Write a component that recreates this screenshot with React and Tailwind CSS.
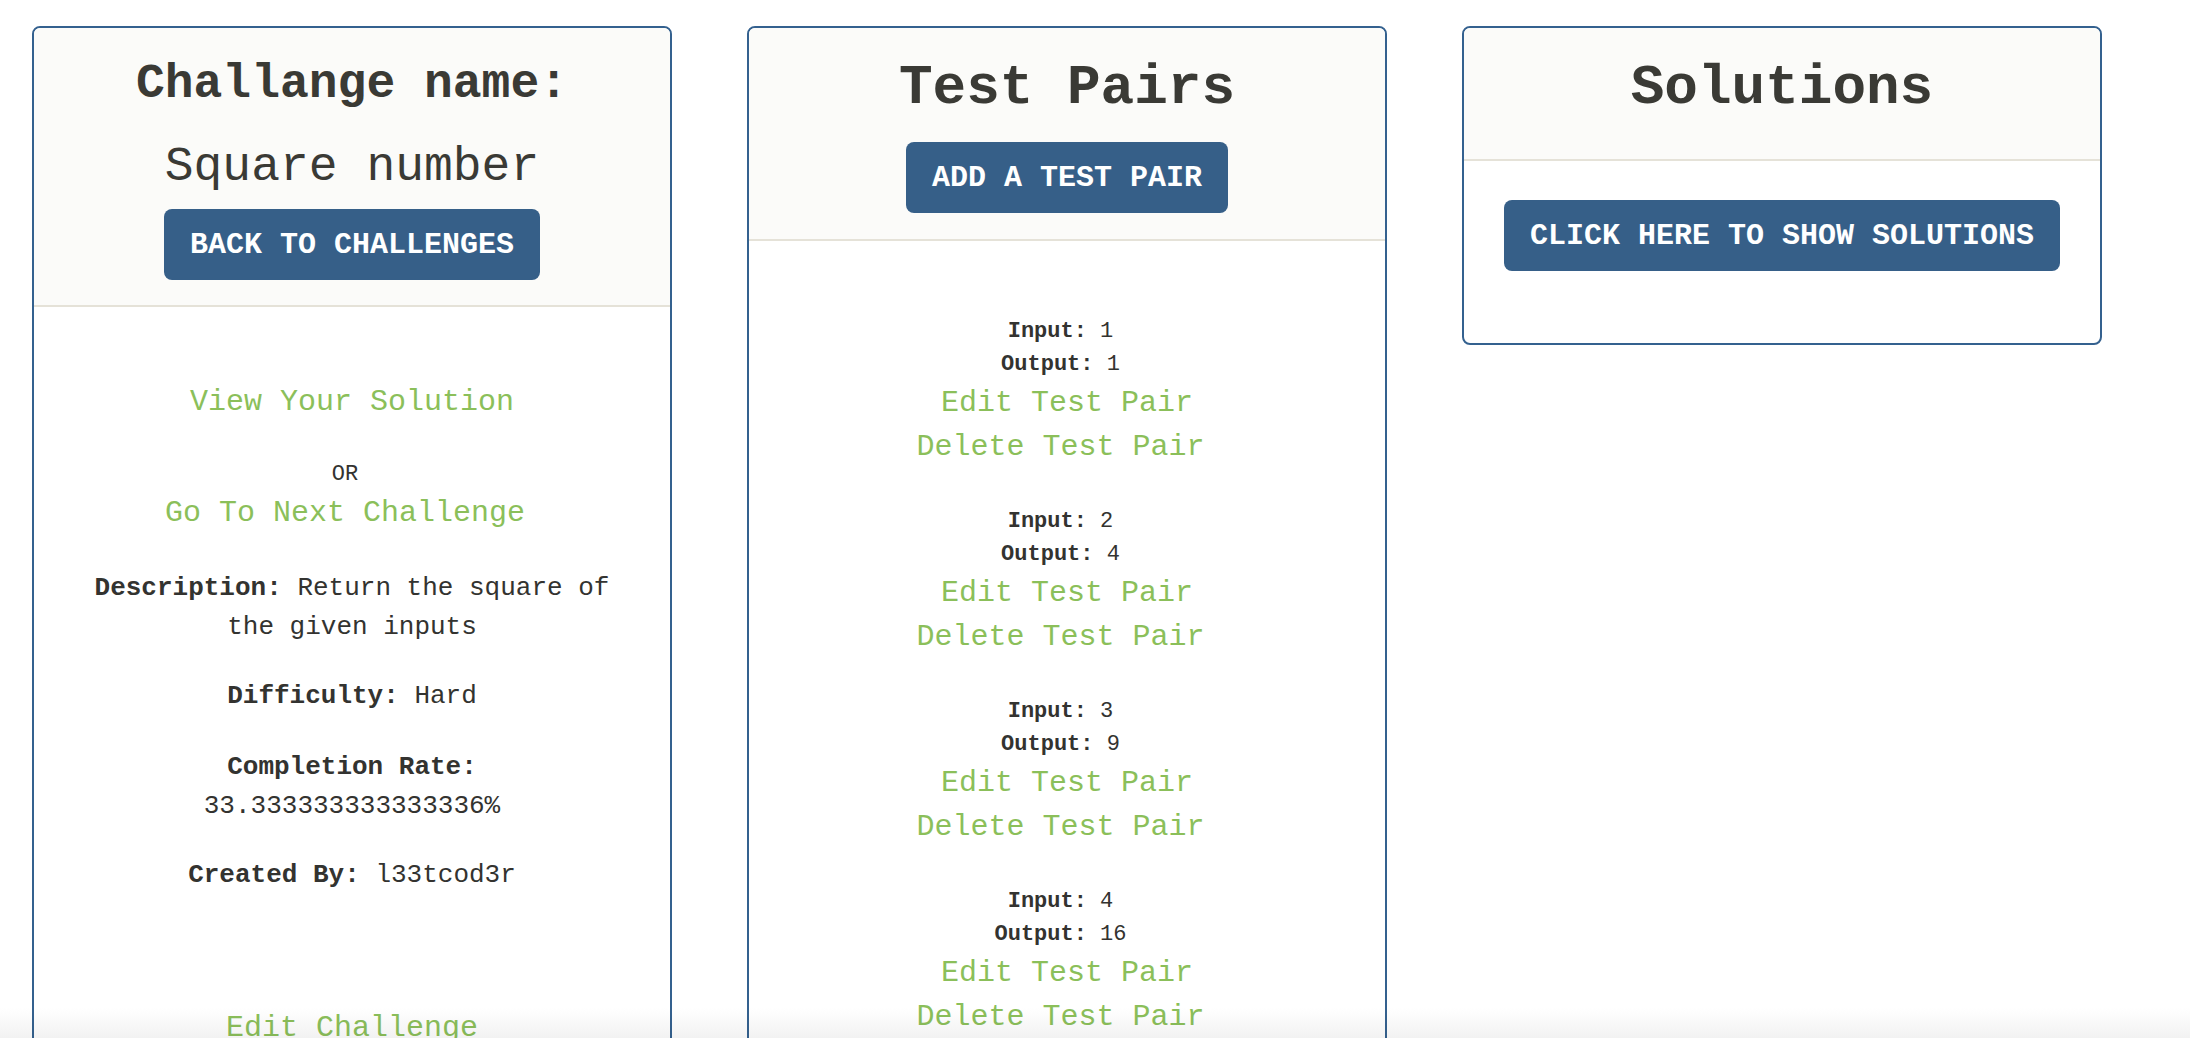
import React from 'react';

const mono = "font-['Liberation_Mono','Courier_New',monospace]";

const PanelButton = ({ children }) => (
  <button className="h-[71px] px-[26px] rounded-[8px] bg-[#365f88] text-white text-[30px] leading-none font-bold uppercase">
    {children}
  </button>
);

const GreenLink = ({ children, className = '' }) => (
  <a className={`block text-[30px] leading-[44px] text-[#8bbf5a] cursor-pointer ${className}`}>{children}</a>
);

const Panel = ({ heading, children }) => (
  <div className="w-[640px] shrink-0 self-start rounded-[8px] border-2 border-[#34618f] bg-white overflow-hidden">
    <div className="border-b-2 border-[#e5e2d8] bg-[#fbfbf9] flex flex-col items-center text-center">
      {heading}
    </div>
    {children}
  </div>
);

const testPairs = [
  { input: 1, output: 1 },
  { input: 2, output: 4 },
  { input: 3, output: 9 },
  { input: 4, output: 16 },
];

export default function App() {
  return (
    <div className={`h-[1038px] overflow-hidden bg-white text-[#333330] ${mono}`}>
      <div className="flex items-start gap-[75px] pl-[32px] pt-[26px]">
        {/* challenge info */}
        <Panel
          heading={
            <div className="flex flex-col items-center pt-[30px] pb-[25px]">
              <h3 className="text-[48px] leading-[53px] font-bold text-[#3a3a35]">Challange name:</h3>
              <h3 className="mt-[30px] text-[48px] leading-[53px] text-[#3a3a35]">Square number</h3>
              <div className="mt-[15px]">
                <PanelButton>Back to Challenges</PanelButton>
              </div>
            </div>
          }
        >
          <div className="px-[40px] pt-[73px] pb-[60px] text-center">
            <GreenLink>View Your Solution</GreenLink>
            <div className="mt-[34px] pr-[14px]">
              <p className="text-[22px] leading-[33px]">OR</p>
              <GreenLink>Go To Next Challenge</GreenLink>
            </div>
            <p className="mt-[34px] text-[26px] leading-[39px]">
              <b>Description:</b> Return the square of the given inputs
            </p>
            <p className="mt-[30px] text-[26px] leading-[39px]">
              <b>Difficulty:</b> Hard
            </p>
            <p className="mt-[32px] text-[26px] leading-[39px]">
              <b>Completion Rate:</b>
              <br />
              33.333333333333336%
            </p>
            <p className="mt-[30px] text-[26px] leading-[39px]">
              <b>Created By:</b> l33tcod3r
            </p>
            <GreenLink className="mt-[111px]">Edit Challenge</GreenLink>
            <GreenLink>Delete Challenge</GreenLink>
          </div>
        </Panel>

        {/* test pairs */}
        <Panel
          heading={
            <div className="flex flex-col items-center pt-[29px] pb-[26px]">
              <h2 className="text-[56px] leading-[62px] font-bold text-[#3a3a35]">Test Pairs</h2>
              <div className="mt-[23px]">
                <PanelButton>Add a Test Pair</PanelButton>
              </div>
            </div>
          }
        >
          <div className="flex flex-col gap-[36px] pt-[74px] pb-[60px] text-center">
            {testPairs.map((pair) => (
              <div key={pair.input}>
                <div className="pr-[13px] text-[22px] leading-[33px]">
                  <p><b>Input:</b> {pair.input}</p>
                  <p><b>Output:</b> {pair.output}</p>
                </div>
                <GreenLink>Edit Test Pair</GreenLink>
                <GreenLink className="pr-[13px]">Delete Test Pair</GreenLink>
              </div>
            ))}
          </div>
        </Panel>

        {/* solutions */}
        <Panel
          heading={
            <div className="pt-[29px] pb-[40px]">
              <h2 className="text-[56px] leading-[62px] font-bold text-[#3a3a35]">Solutions</h2>
            </div>
          }
        >
          <div className="flex justify-center pt-[39px] pb-[72px]">
            <PanelButton>Click here to show solutions</PanelButton>
          </div>
        </Panel>
      </div>

      {/* faint fade at the bottom edge */}
      <div className="pointer-events-none fixed inset-x-0 bottom-0 h-[30px] bg-gradient-to-b from-white to-[#f2f2f2] mix-blend-multiply" />
    </div>
  );
}
